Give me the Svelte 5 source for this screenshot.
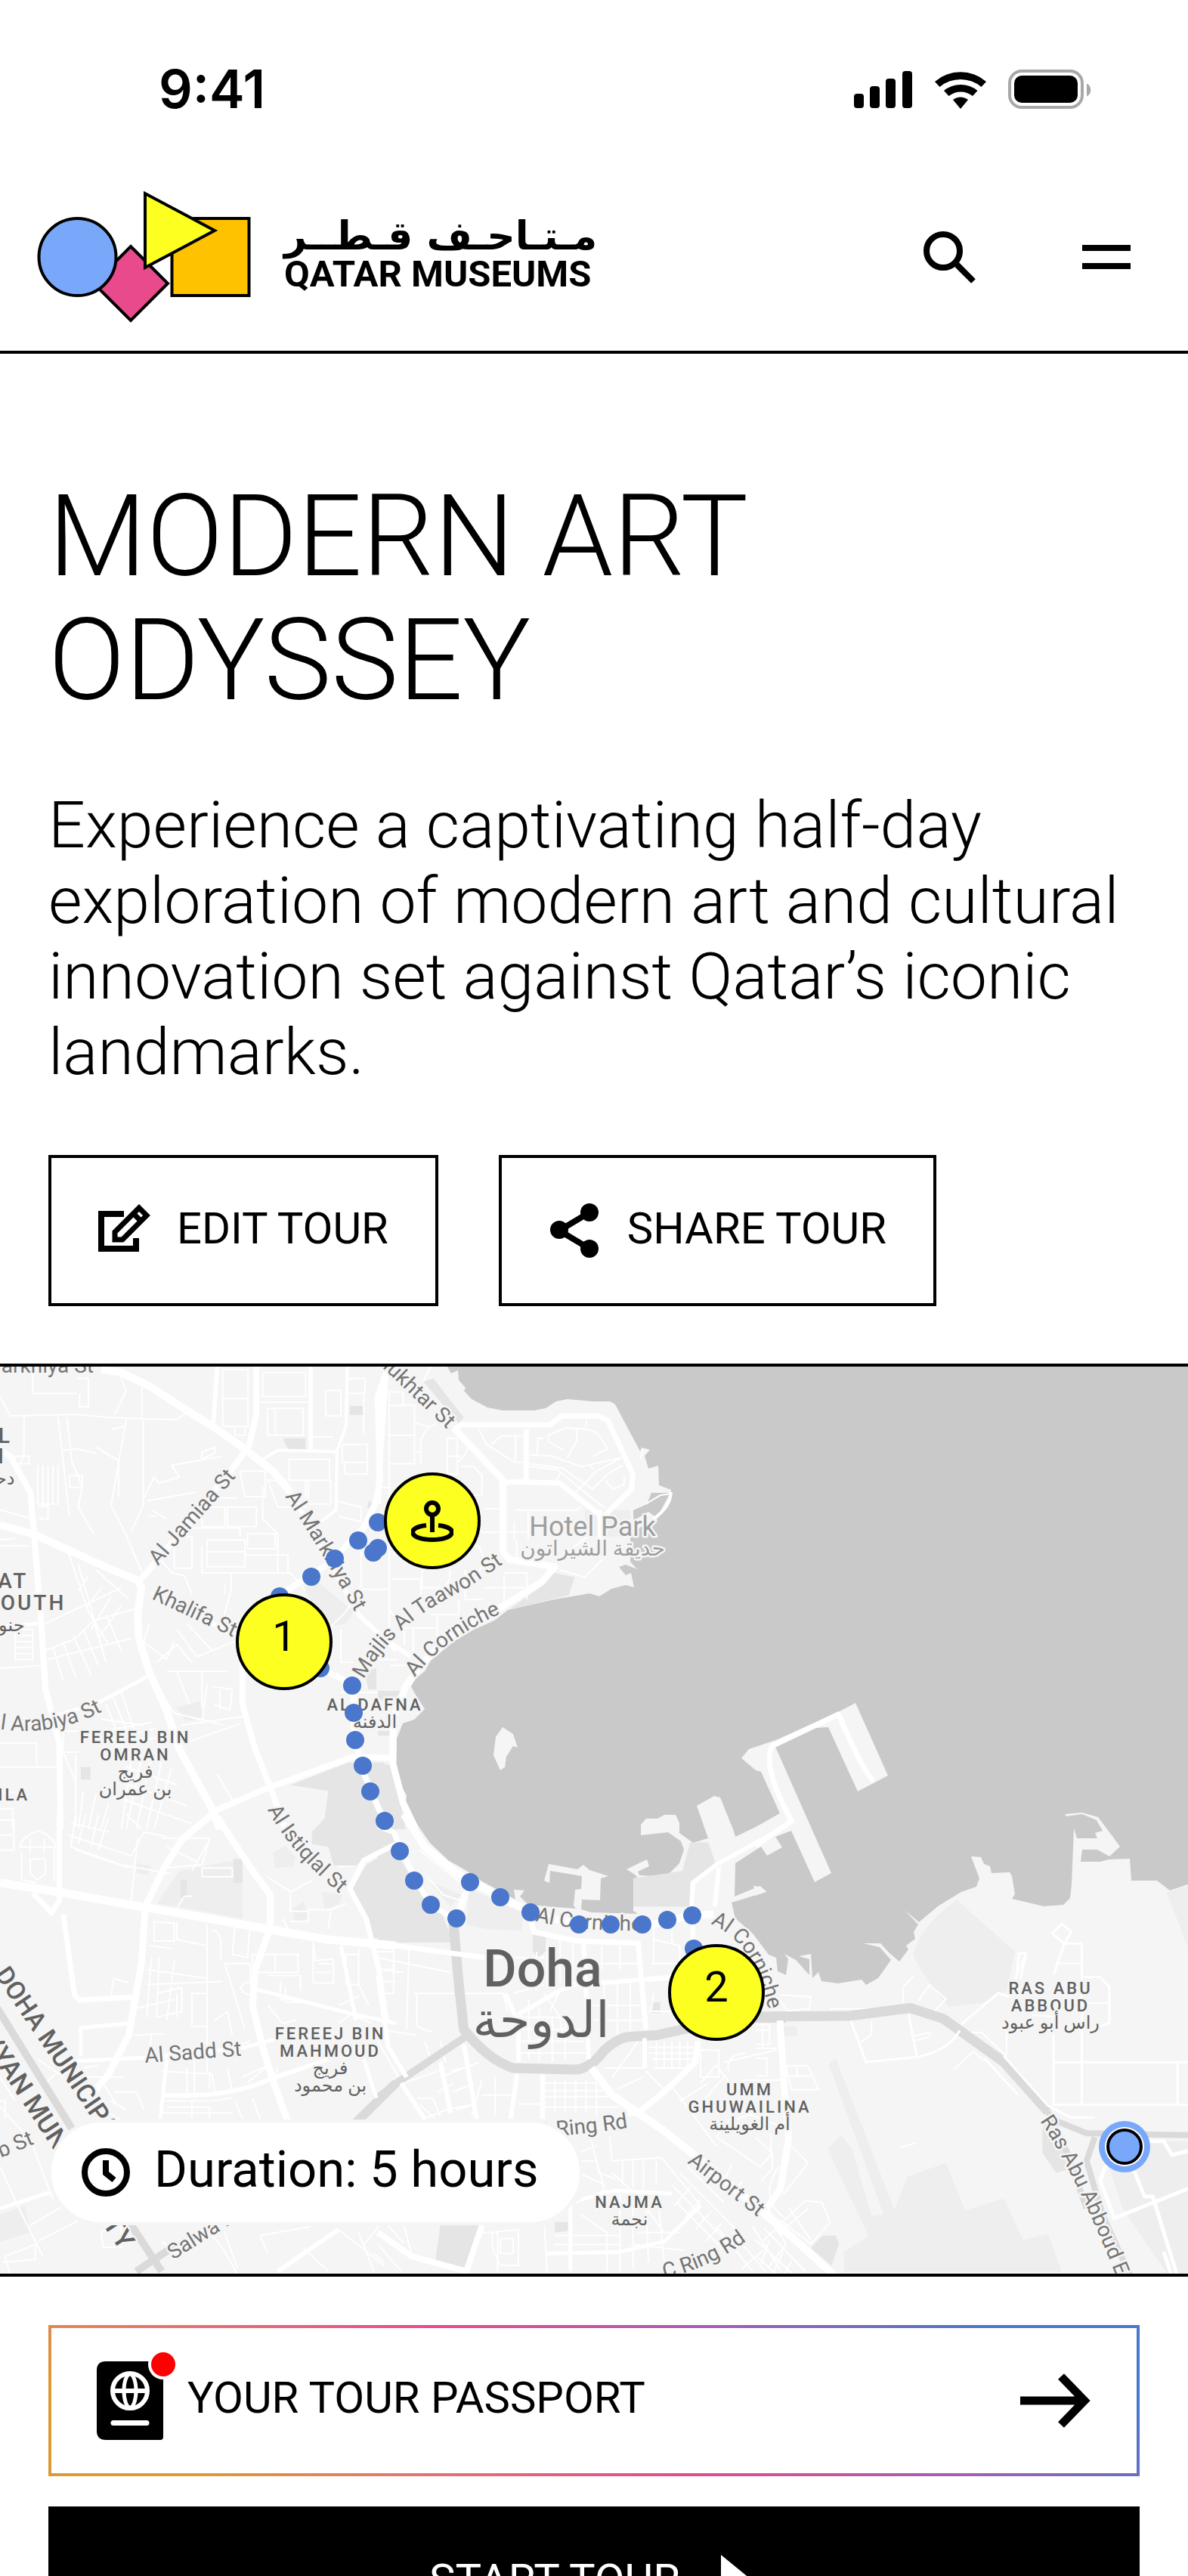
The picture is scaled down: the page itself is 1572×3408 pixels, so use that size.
<script lang="ts">
  type Road = { w: number; d: string };
  type Tile = {
    transform: string;
    parks: string;
    fields: string;
    minor: string;
    trunks: Road[];
    roads: Road[];
  };

  const coast =
    'M592 1808 597 1817 606 1813 607 1826 616 1836 614 1840 624 1851 645 1862 665 1866 707 1866 722 1863 736 1854 751 1851 784 1854 807 1854 814 1858 847 1920 849 1915 860 1918 853 1926 858 1943 871 1939 872 1965 888 1971 887 1985 869 2010 848 2020 834 2033 834 2066 843 2076 828 2070 819 2073 828 2084 835 2081 839 2100 828 2097 809 2102 793 2112 780 2108 734 2116 672 2130 654 2144 627 2156 600 2172 570 2197 562 2211 550 2221 544 2231 548 2239 562 2261 548 2275 533 2280 525 2300 524 2334 528 2358 538 2375 537 2383 545 2404 555 2418 569 2438 593 2461 619 2476 638 2489 682 2513 680 2500 694 2501 688 2509 698 2519 720 2522 762 2525 759 2521 761 2500 769 2499 770 2482 728 2475 727 2491 720 2488 726 2466 764 2473 772 2467 780 2474 805 2482 795 2485 794 2514 770 2513 769 2526 782 2530 844 2532 838 2528 838 2485 844 2484 840 2480 829 2473 856 2460 859 2469 844 2476 846 2481 872 2482 886 2478 899 2465 905 2447 901 2436 884 2424 848 2428 848 2414 855 2406 870 2406 879 2401 894 2401 899 2412 899 2425 917 2438 937 2432 922 2389 945 2376 953 2378 970 2420 973 2430 1000 2417 1032 2399 1007 2344 1000 2342 981 2326 991 2314 1027 2302 1111 2264 1132 2253 1175 2349 1135 2370 1096 2285 1080 2286 1026 2311 1100 2478 1078 2490 1047 2422 1026 2430 1035 2444 1015 2455 1007 2443 973 2465 972 2509 1006 2495 1014 2503 968 2517 973 2538 996 2558 1017 2586 1027 2590 1029 2608 1040 2613 1043 2592 1038 2585 1053 2593 1071 2613 1071 2592 1057 2588 1073 2585 1075 2617 1083 2609 1087 2621 1109 2624 1140 2619 1146 2626 1162 2617 1179 2593 1164 2576 1142 2571 1165 2571 1177 2584 1190 2595 1202 2579 1199 2574 1211 2565 1209 2556 1215 2546 1197 2527 1216 2543 1241 2522 1272 2503 1292 2496 1296 2485 1285 2456 1298 2457 1302 2466 1310 2469 1312 2478 1336 2477 1339 2482 1343 2506 1339 2512 1381 2522 1407 2520 1416 2511 1418 2493 1421 2419 1425 2432 1452 2432 1449 2425 1459 2422 1451 2408 1432 2400 1410 2403 1410 2400 1432 2398 1453 2404 1474 2432 1482 2443 1468 2456 1452 2447 1432 2447 1430 2463 1456 2463 1467 2460 1495 2459 1497 2488 1531 2488 1548 2501 1572 2493 1572 1808Z';
  const islands =
    'M665 2285 679 2294 685 2312 679 2310 670 2324 668 2338 662 2342 653 2322 656 2298ZM997 2495 1005 2496 1014 2502 1000 2508Z';

  const tiles: Tile[] = [
    {
      transform: 'matrix(.3342 0 0 .3954 0 1800)',
      parks:
        'M1150 1420 1380 1345H1520L1568 1450V1568H1280L1300 1440ZM1120 260h90v38h-70ZM1385 152h55v30h-55ZM320 1360h38v42h-38ZM1440 1040l50-10v70h-30ZM1460 470l20 10-10 20-16-10Z',
      fields: 'M1200 760 1260 740 1400 840 1370 880 1300 890ZM700 1160l90-20 15 55-70 12Z',
      minor:
        'M40 185 300 180 430 190 560 195 700 197 740 175M0 120 40 185M130 30v80h175M305 60h45v95h-35v-45M470 40l30 60-45 80M562 90v105h5v290l-50 90M95 185v130l-20 40M230 190l45 330M265 190l20 150 40 80-15 70 60 90M500 195l-60 290 60 100 60 120M440 230l60-10M250 300l50-5 80 15M150 350v130h80V350M170 350v130M190 350v130M210 350v130M275 385h50v40h-50ZM380 290l90 45v120M60 320h55v25H60ZM570 460l40-70 20 20 80-20-30-40 200-30M580 470l200-30M800 305l50-15v20l-50 20ZM882 30h100v190H882ZM885 128h97M1040 40h170v80H1040ZM1060 160h140v90H1060ZM1090 165v85M1030 140h200M930 220h40v30h-40ZM1290 100h60v85h-60ZM1375 60h70v50h-70ZM1380 110h60v140M1230 255h90M1355 280h100v60h-100ZM1365 340h90v40h-90ZM1145 330h160v70h-160ZM950 370h100v85h-80ZM1060 400h150v90h-110ZM1220 400h90v80h-90ZM830 460h110M800 490h90v65h-90ZM900 490h115v65H900ZM820 600h150v90H820ZM820 640h150M690 590h70v105h-70ZM690 600l80-40h180v30M980 580h110v50h-110ZM970 650h170v60M800 620v90H1150l60 60M915 710v60l-30 90M890 750v30M600 500l60 30M590 520h30M610 640l70 70 50 10 30 60M1040 420v110l60 50v130M1430 640v110l-60 90-60 50M1350 900v110h50M1430 765h110M1350 1110h190M1330 470l100 20v50l-90-20M0 500 130 530M0 600 60 595 M0 620h115M150 490l40-5v45h-35M270 640l80 200 80 110M290 650l230 70M310 680l100 300M380 700l130 100M350 720l-40 50M400 760l-60 70M440 790l-80 110M480 820l-90 110M180 880l300-120M180 970l120-40 70-60 170-40M190 1000l330-70M210 960l40 110M250 940l50 120M290 920l70 130M330 900l60 120M370 870l50 140M420 850l60 120M60 900h70v100H60ZM60 920h70M60 940h70M60 960h70M60 980h70M0 1030l170-10M590 880l-20 60 90 60 30-60M620 1010l80-60 60 60M700 900l80 90 150-50M740 880l100 90M660 1040h240M700 1040l50 110M800 1040v120M820 1080l-20 130M600 1060l90 120 200 40M840 1090l80 10-10 70-60-20M870 1100v70M720 1220l250-30M750 1275l200-60M480 1110l70 170M450 1130l70 150M420 1150l70 150M400 1200l170 20M410 1240l190-30M430 1270l190-40M460 1290l170-30M250 1190v120h60M260 1240h50M250 1310l50 100M300 1320v240M330 1440l-20 128M380 1450l-30 118M430 1480l-30 88M520 1340l-40 228M560 1330l-60 238M600 1320l-60 248M640 1340l-60 228M680 1360l-70 208M500 1360l200 60M480 1410l260 80M460 1460l300 90M0 1280h145v80H0M0 1360h225M0 1445h70M0 1500h50v68M860 1385l60 85M750 1340l60 100M1445 1430l70-10 10 60',
      trunks: [],
      roads: [
        { w: 10, d: 'M400 30 480 40 600 90 700 145 850 225 960 290 1080 370 1150 440' },
        { w: 10, d: 'M0 550 130 580 300 645 430 695 545 735 560 760 545 850 550 930 590 1040 660 1170 710 1300 840 1500 870 1568' },
        { w: 8, d: 'M0 300 40 320 120 440 135 580 165 900 180 1100 235 1280 240 1568' },
        { w: 8, d: 'M550 740 750 540 940 340 980 290' },
        { w: 8, d: 'M1015 20V180L985 290' },
        { w: 6, d: 'M1230 20V300M860 20 845 210' },
        { w: 4, d: 'M1375 20 1370 220 1335 300 1330 500 1270 540M1040 330 1100 300 1330 305' },
        { w: 8, d: 'M1530 40 1495 120 1505 400 1490 470 1440 560 1300 680 1170 750 1010 850 960 1000 960 1150 1010 1300 1080 1450 1130 1568' },
        { w: 6, d: 'M1150 440 1420 850 1568 970M600 780 940 920' },
        { w: 5, d: 'M600 1050 400 1140 180 1200M0 890 150 880' },
        { w: 8, d: 'M840 1510 1060 1430 1400 1325 1568 1330M1200 1000 1400 1085 1400 1250 1440 1380 1500 1500 1540 1568' }
      ]
    },
    {
      transform: 'matrix(.3342 0 0 .3954 500 1800)',
      parks: 'M640 760 700 710 780 725 755 785 515 835ZM180 70l40-10 120 130-20 20ZM0 1105h90v30H0ZM0 1240h60v15H0ZM0 1345 60 1355 110 1568H40L0 1450Z',
      fields: 'M820 500h180v90h-180Z',
      minor:
        'M45 105h55v45H45ZM45 150h100v195H45ZM45 250h100M150 210l50 10M150 305h25M170 350V270q10-40 60-60M275 260h40v120h-40ZM275 320h55M320 340l30-30 10-40M330 355h50l32 30v65h-60M0 425h50M45 240v700M400 230l30 50 110 60h40M450 280l40-28h80M545 255v80M630 315l5-55h25M600 315l90 5 115 35 160-30M600 345l130 15 120 70M600 355l110 10 130 90 60 40M675 250l70-25 90 5 35 15 40 50-60 25M675 250v20l60 30M785 225l5 40-40 60M825 195v25M785 440l80-70 100-45M835 345l20 20M720 380l-10 20M850 430l60-50 60-30M900 400l30 30 45-15v-30M420 495h70M545 500h240l20-10M410 575h70M500 575h90M540 540v60M595 500v100M340 620h60l20 40-20 50h-60M500 710h90v90M500 715v95M345 700v100h70M420 760h160M50 730h120v90M175 700v60h80q40-20 30-60M45 835l60 60h130M105 900v50M140 900v80M210 850h110v-50M235 850v80M0 1000h80M50 1020h70M180 70l30-50M720 700l100 25 70-60M750 640l80-50M550 600v60M1060 480l60-30 45-5M1050 300l-12 30',
      trunks: [],
      roads: [
        { w: 7, d: 'M300 230 330 215H680L730 185H870L910 200 1010 380 1005 430 890 525 720 410 520 405 490 420' },
        { w: 9, d: 'M300 225 495 400V640L520 665 700 690 650 740 480 830 300 910 180 1010 110 1090 60 1200 60 1350 100 1480 150 1568' },
        { w: 7, d: 'M587 230V400M880 500V600' },
        { w: 8, d: 'M0 480 10 300 30 50' },
        { w: 6, d: 'M40 940 130 990M0 1330H60' },
        { w: 4, d: 'M1160 440Q1160 490 1090 530' }
      ]
    },
    {
      transform: 'matrix(.3342 0 0 .3954 0 2400)',
      parks:
        'M1568 0H1300L1235 60V100L1300 110 1320 170 1400 180 1440 150 1568 100ZM1568 110 1450 170 1395 250 1480 415H1568ZM925 150h35v80h-35ZM715 220h25v60h-25Z',
      fields: 'M620 300 710 190 960 150V350L800 325 700 310ZM0 1340 100 1310 120 1400 0 1430ZM540 165l60 10-15 30-45-8ZM1080 130l50-25 40 40-10 30-70 5ZM1155 320l50-30 15 60-50 15ZM1275 260l80 10-10 30-60 20Z',
      minor:
        'M0 20h55v100H0M0 70h50M80 110q0-30 70-55 70 25 70 55ZM85 130v90l60 10M120 80v50M175 80v50M215 110v115M120 150h60v50l-30 20-30-20ZM300 0l-20 110 200 60 200 30M300 120l210 60M340 0l-30 100M390 0l-30 110M430 10l-40 110M280 30l150 30M270 70l250 70 50-80 90 15M500 0l60 50M545 80l-25 210M610 360l80 5v60h-80ZM590 440l90 10M700 360v60l120 20M820 370v500M840 390q30 0 35 40v60M930 380h60l-10 100-60-10ZM600 480l-20 200M630 480l-10 200M690 490l-30 200M580 520l240 30M580 570l300-10M620 600l100-20v80l-100 20M700 600v80M760 600h60v110h-60ZM890 500h100v60M890 500l80 220M850 690l50-30 20 80M540 650l150-30M530 740l120-5M600 740l-10 60M830 800l160-40M440 610l10-60 60 15M1000 470h180v60h-180ZM1090 470v60M1060 540h130v50M1110 560v60h80M1130 580v50h60M1240 430l10 60 70-5v80h-80ZM1260 500h60M1250 530h60M1370 470h50v100h-50ZM1420 450v120l40 70M1480 460h80v60h-70M1500 560h68M1150 260l90-40M1150 265v60h70v35h-70M1220 320h90l60-20M1310 325l-10 60M1120 350l30 50M1060 210l90 50M1335 175h70M800 180h120v30H800ZM760 190l60-90M640 80h190l-30 90M700 315l30-40h30M660 110l120 50M650 180l150-10M1340 700l50-30 80 30M1340 640l80-30M950 580l30-20 30 20v30l-40-10ZM1060 640l60 60 50-10M640 860l200 10 10 60M650 820h120v120M740 850v90M830 860v60M900 850l20 80M960 880l100-40M980 900l80-60M1100 850l-20 40M640 960h200l80-10M660 980h170v40M760 960v60M930 960l30 60M1000 950l30 70M640 1000h280M350 930l60 60 100 50M400 890l60 80M440 960l60 30M330 880h160M330 850l60-10M450 930h90l30 60M0 880l60 80M0 960h20v60M150 820l100 60M180 900l40-30M0 980l120 110 90 200M0 1180l70 130 100 170M120 1376l120-60M150 1430l160-70M20 1480l120-40v50L10 1500M20 1480l20 58M400 1400l80-20v70h-70ZM640 1430l60 40M820 1390l60 60 60 90M890 1400l50 120M1030 1410l200-30M1030 1410l30 60M1200 1450l100 80M1340 1390l180 120M1420 1400l60 130M1500 1380l-60 60M1480 1470l40 30M1170 1060l100-10 298 30M1130 1120l300 30 138-30',
      trunks: [
        { w: 10, d: 'M-10 650 290 1060M500 1350 640 1530M540 1530 700 1440' },
        { w: 12, d: 'M1400 1040 1568 900' }
      ],
      roads: [
        { w: 11, d: 'M0 230 240 262 560 310 800 345 1060 385 1300 420 1568 440' },
        { w: 7, d: 'M235 0V290L205 330 130 265M250 335 295 605 315 622 540 612' },
        { w: 9, d: 'M840 0 720 85 650 180 575 310 560 500 510 740 430 870 370 930' },
        { w: 9, d: 'M860 10 1000 190 1070 270 1070 380 1010 520 1000 640 1040 780 1080 890 1140 1030' },
        { w: 7, d: 'M1568 100 1440 155 1385 250 1450 350 1500 520 1530 700' },
        { w: 5, d: 'M1350 440 1410 690M1010 585 1400 670 1568 700M200 830 580 815 975 780 1100 750M660 820 635 1020M0 1320 200 1265M320 710V810M320 715 510 700M1440 820 1490 950' },
        { w: 6, d: 'M650 940Q900 950 1060 890L1300 820M1100 1530 1340 1390' }
      ]
    },
    {
      transform: 'matrix(.3444 0 0 .3954 500 2400)',
      parks:
        'M0 130 60 110 140 230 250 340 290 430 0 430ZM982 215 1170 190 1200 95H1270L1300 170 1210 230 1200 310H982ZM240 1376H390L350 1530 220 1500ZM680 1365h50v30l-50 5ZM595 400h50v60l-30 20-20-20ZM0 0h30l30 60-60 10ZM1050 630h35v35h-35Z',
      fields: 'M350 250 560 330 550 390 420 385 340 370ZM240 240 320 270 280 310 200 230Z',
      minor:
        'M160 120l160 110M190 210l60 60 70 20M330 260l-40 90M0 480l280 50M60 440v160M120 450l-10 270M140 600h150M150 600v110l60 20M0 520l100 10M0 600h60M0 720l150 20M0 760l80 120M180 760l30 80M240 760l20 70M410 480h230M610 460v130M650 440v140M700 420v140M750 430v130M790 500h220M860 440v80M930 440v80M850 560l200-10M330 600h150l20 60M520 600l120-30M640 600l60 80 10 60M700 590l-40 70M520 680h230M540 720h240M580 620v200M620 650v180M670 680v150M720 690v130M530 760h260M540 800h260M820 640h190M830 690h190M870 560v180M920 560v180M970 560v180M1060 420l100 20v60h-100ZM1050 500h120M1040 560l100-10M1040 660h90M1060 600l-10 60M1130 390v50M1060 360v60M1040 780h190M1040 800h180M1050 820h170M1060 850h140M1070 760v90M1100 760v90M1130 760v90M1160 760v90M1190 760v90M900 880l100-120M870 850h150M920 920l100-40M1030 860l80 70M1240 790h70v90h-70ZM1330 830l200-40M1350 860q-20-50 60-60M1400 890h160M1240 900l60-60 60 70M1250 960l80-80M1120 900l180 210M1160 960l110-60M1300 1080l80-90 188 60M1300 1080l170 100 40-40v-70M1380 1020l100-30M400 890l-40 120M450 880v130M400 940h110M640 870v150M680 890v110M720 890v110M760 890v110M800 890v110M840 900v110M640 900h200M640 925h230M640 945h260M540 970h100M640 980h290M130 860l60-20M100 900l160-50M150 950h60l30 60M160 970l60 50M230 930l60-30M180 1020l80-30 110-20M280 860l90-20M290 930l80-30M300 990l80-20M240 880l150-50M770 1160h70l30 90M820 1090l30 110 60 20M890 1080l10 80 190-10 150 160M900 1200l100 80 100 120M940 1160v80M980 1160v90M1020 1160v100M1070 1160v80M770 1200l100 40-30 90M780 1130l60-20M760 1300l110-40 260 10M1130 1240l220 200M1160 1200l250 220M1190 1180l140 120M1150 1300l180 160M1200 1250l-60 60M1240 1290l-60 60M1280 1330l-60 60M1320 1370l-60 60M740 1330v200M680 1410h250M680 1440h250M640 1376l10 160M650 1470h280M930 1270v260M980 1290v230M1030 1300l10 200M1080 1320l20 180M780 1340l100 60v130M400 1400h60v130M440 1400l100-10v120h-70l-30-60ZM470 1420h50v50h-50ZM100 1376l30 100M0 1440l90 90M40 1376l60 60M1000 1400h160M980 1440l200 20M1300 1380l140 150M1360 1400l130 130M1500 1320l68 120M1440 1380l110 150M1480 1460l-80 60M1568 1440l-70 80M1540 1180q-80 100 20 170M1360 1170l-20 40M1400 1230l-20 20',
      trunks: [
        { w: 13, d: 'M290 360 310 560 330 720Q420 820 520 850L760 855Q820 850 870 790 930 745 970 745L1070 740 1200 715 1300 680 1568 682' },
        { w: 10, d: 'M-10 955 80 895 345 740' }
      ],
      roads: [
        { w: 10, d: 'M100 0 180 110 300 195 480 285 640 345 800 370 1050 370 1200 340 1290 335' },
        { w: 7, d: 'M0 40 60 60 150 230 210 310 300 350M350 230 320 320' },
        { w: 7, d: 'M0 432 280 465 410 480M580 330 600 395 770 425 1000 432 1030 720' },
        { w: 6, d: 'M1205 310 1210 230 1300 170 1568 40M1310 180 1295 310M1210 345V450' },
        { w: 10, d: 'M820 850 900 940 1100 1060 1300 1200 1568 1400' },
        { w: 8, d: 'M1230 760 1220 830 1100 930 1000 1000 960 1000' },
        { w: 6, d: 'M1025 750V850M535 870 510 1020M632 870V1020M90 900 180 1020M240 830 280 1000M330 770 380 1020M790 430 800 600 810 820M0 540 40 780 110 880M490 600 540 700V830M540 670 700 590 790 560M860 565 1130 545' },
        { w: 8, d: 'M0 1400 130 1480 340 1530 400 1376' },
        { w: 5, d: 'M650 1470 930 1465 1100 1430 1240 1310M740 1300V1530M780 1290 910 1260 1130 1270' }
      ]
    },
    {
      transform: 'matrix(.3648 0 0 .5229 1000 2200)',
      parks: 'M200 1480 240 1450 290 1448 302 1470 275 1525ZM1040 1180 1060 1150 1120 1230 1140 1280 1090 1290 1040 1240Z',
      fields:
        'M730 600 940 730 910 830 820 860 700 870 620 800 570 740Q600 660 730 600ZM1490 580 1568 565V720ZM550 1300 690 1265 760 1385 900 1355 970 1460 1060 1445 1110 1540H320V1490L410 1450 260 1230 310 1195 350 1230 420 1400 500 1390ZM265 1015 290 1000 590 1540H540ZM1250 1210H1568V1553H1500L1330 1380ZM90 920h60v24h-60Z',
      minor: 'M90 840l110 5-5 30-80 5-30-30M0 915h50v50H0M0 930h50M0 975h80M25 915v60M0 1000h40v45H0M110 1020h80l38 60H130ZM120 1045h80M150 1020v30M0 1200l60 40v40l-40 30M110 1210l80 55-90 80M30 1460l150-100 60 5 30 50-70 55-110-60M90 1440l100-60M120 1380l80 80M0 1460l140 90M30 1430l150 110M60 1410l30 40M0 1500l80 50M20 1520l30-60M60 1550l40-60M100 1553l30-40M270 875h180M420 905v35l-40 20M535 860v-40l40-30M590 855l40-40 60 35-40 30M570 945l60-10q20 10-50 20M720 1028l70-45 40 25M520 1227l60-12M910 930v60M750 935h70l90 60M1000 890l80 5M940 800l40-65M1140 860h140M1100 760h80',
      trunks: [
        { w: 13, d: 'M-5 895 340 893 560 873 680 900 900 1010 1060 1135' },
        { w: 8, d: 'M1060 1150 1200 1190 1568 1195M1230 1200 1200 1260 1260 1400 1360 1553M1060 1135 1130 1240 1200 1380' }
      ],
      roads: [
        { w: 7, d: 'M430 298Q400 290 300 130L60 210Q20 260 130 400L0 462' },
        { w: 9, d: 'M88 905 105 1090 120 1200 90 1330 40 1380' },
        { w: 10, d: 'M0 1370 290 1553' },
        { w: 3, d: 'M345 905 400 1010 590 997Q700 980 740 930M555 890 585 997M745 915 880 835 920 845M945 800 955 735H980L960 800' },
        { w: 3, d: 'M1080 940V1118H1568M1083 1010H1568M1183 710V1118M1110 710H1183M1190 795H1250L1283 820V910L1250 920M1530 1010V1118M1080 790 1120 710 1075 685 1110 660 1145 680 1120 710M900 995 1060 1120 1140 1150H1230M830 1000 950 1092' },
        { w: 5, d: 'M1270 1270 1250 1310 1300 1405 1568 1330M1370 1280 1410 1350H1440L1530 1553M1480 1490 1510 1553M1400 1210H1480L1510 1245 1568 1235' }
      ]
    }
  ];

  type Street = { text: string; d: string; size?: number; end?: boolean; bold?: boolean };
  const streets: Street[] = [
    { text: 'Al Markhiya St', d: 'M-100 1816H124', end: true },
    { text: 'Al Jamiaa St', d: 'M209 2072 322 1943' },
    { text: 'Al Markhiya St', d: 'M377 1980Q425 2050 485 2160' },
    { text: 'Khalifa St', d: 'M200 2115 330 2176' },
    { text: 'Al Arabiya St', d: 'M-18 2284Q74 2305 156 2252' },
    { text: 'Mukhtar St', d: 'M493 1797 620 1918' },
    { text: 'Majlis Al Taawon St', d: 'M481 2222Q505 2180 535 2154 560 2130 617 2102L690 2052' },
    { text: 'Al Corniche', d: 'M549 2219Q588 2165 678 2128' },
    { text: 'Al Istiqlal St', d: 'M354 2394Q385 2455 470 2522' },
    { text: 'Al Corniche', d: 'M708 2541Q760 2556 870 2554' },
    { text: 'Al Corniche', d: 'M940 2545Q1000 2570 1018 2665' },
    { text: 'Al Sadd St', d: 'M192 2729 340 2718' },
    { text: 'Airport St', d: 'M909 2861 1030 2954' },
    { text: 'B Ring Rd', d: 'M650 2832Q760 2826 831 2815', end: true },
    { text: 'C Ring Rd', d: 'M879 3014Q945 3000 1000 2955' },
    { text: 'Salwa Rd', d: 'M229 2990 400 2884' },
    { text: 'Al Waab St', d: 'M-130 2910 46 2836', end: true },
    { text: 'Ras Abu Abboud Expy', d: 'M1376 2806Q1430 2885 1500 3070' },
    { text: 'DOHA MUNICIPALITY', d: 'M-8 2612 244 2982', size: 34, bold: true },
    { text: 'AL RAYYAN MUNICIPALITY', d: 'M-131 2538 159 2978', size: 35, bold: true, end: true }
  ];

  type Place = { lines: string[]; arabic: string[]; x: number; y: number; kind: string };
  const places: Place[] = [
    { lines: ['AL DAFNA'], arabic: ['الدفنة'], x: 496, y: 2263, kind: 'district' },
    { lines: ['FEREEJ BIN', 'OMRAN'], arabic: ['فريج', 'بن عمران'], x: 179, y: 2306, kind: 'district' },
    { lines: ['FEREEJ BIN', 'MAHMOUD'], arabic: ['فريج', 'بن محمود'], x: 437, y: 2698, kind: 'district' },
    { lines: ['UMM', 'GHUWAILINA'], arabic: ['أم الغويلينة'], x: 992, y: 2772, kind: 'district' },
    { lines: ['NAJMA'], arabic: ['نجمة'], x: 833, y: 2921, kind: 'district' },
    { lines: ['RAS ABU', 'ABBOUD'], arabic: ['راس أبو عبود'], x: 1390, y: 2638, kind: 'district' },
    { lines: ['SILA'], arabic: [], x: 10, y: 2382, kind: 'district' },
    { lines: ['NUAIJAT'], arabic: [], x: -30, y: 2101, kind: 'suburb' },
    { lines: ['SOUTH'], arabic: [], x: 34, y: 2130, kind: 'suburb' },
    { lines: ['AL'], arabic: [], x: -4, y: 1909, kind: 'suburb' }
  ];

  const dots: [number, number][] = [
    [500, 2014], [474, 2038], [500, 2048], [494, 2054], [443, 2062], [412, 2086], [370, 2112],
    [424, 2207], [466, 2230], [468, 2266], [470, 2302], [480, 2336], [490, 2370], [509, 2409],
    [529, 2449], [548, 2488], [570, 2520], [604, 2538], [622, 2490], [662, 2510], [702, 2530],
    [766, 2546], [808, 2546], [850, 2546], [883, 2540], [916, 2534], [918, 2578]
  ];

  const left = (x: number) => `${(x / 1572) * 100}%`;
  const top = (y: number) => `${((y - 1808) / 1200) * 100}%`;
</script>

<div class="app">
  <div class="status">
    <span class="time">9:41</span>
    <svg class="status-icons" viewBox="0 0 314 52" aria-hidden="true">
      <rect x="0" y="32" width="13" height="19" rx="4" />
      <rect x="21" y="22" width="13" height="29" rx="4" />
      <rect x="42" y="12" width="13" height="39" rx="4" />
      <rect x="64" y="2" width="13" height="49" rx="4" />
      <path d="M107 16a52 52 0 0 1 68 0l-6.500 7a43 43 0 0 0-55 0zM119 28a35 35 0 0 1 44.500 0l-6.500 7a25 25 0 0 0-31.500 0zM131 40a16 16 0 0 1 20 0l-10 12z" />
      <rect x="206" y="2" width="96" height="48" rx="16" fill="none" stroke="#a8a8a8" stroke-width="4" />
      <rect x="212" y="8" width="84" height="36" rx="10" />
      <path d="M308 18.500a9.500 9.500 0 0 1 0 17z" fill="#a8a8a8" />
    </svg>
  </div>

  <header class="header">
    <a class="brand" href="#home" aria-label="Qatar Museums">
      <svg class="mark" viewBox="48 248 286 184" aria-hidden="true">
        <g stroke="#000" stroke-width="4">
          <path d="M173 326 222 375 173 424 124 375z" fill="#e84a8c" />
          <circle cx="102.500" cy="340" r="51" fill="#79a8fb" />
          <path d="M227.500 289h102v102h-102z" fill="#ffc200" />
          <path d="M192 256 284 305 192 354z" fill="#fcff1f" />
        </g>
      </svg>
      <span class="names">
        <span class="name-ar" lang="ar" dir="rtl">مـتـاحـف قـطــر</span>
        <span class="name-en">QATAR MUSEUMS</span>
      </span>
    </a>
    <nav class="tools">
      <button class="icon-btn" aria-label="Search">
        <svg viewBox="0 0 72 72" class="tool-icon"><circle cx="28" cy="28" r="22" fill="none" stroke="#000" stroke-width="8" /><path d="M44 44 68 68" stroke="#000" stroke-width="8" /></svg>
      </button>
      <button class="icon-btn" aria-label="Menu">
        <svg viewBox="0 0 72 72" class="tool-icon"><path d="M4 20h64v8H4zM4 44h64v8H4z" /></svg>
      </button>
    </nav>
  </header>

  <main>
    <section class="intro">
      <h1>MODERN ART ODYSSEY</h1>
      <p>Experience a captivating half-day exploration of modern art and cultural innovation set against Qatar’s iconic landmarks.</p>
      <div class="actions">
        <button class="outline">
          <svg class="action-icon" viewBox="130 1592 72 72" aria-hidden="true">
            <path d="M164 1606H134V1652H180V1638" fill="none" stroke="#000" stroke-width="8" />
            <path d="M152 1640V1630L184 1598 194 1608 162 1640ZM175 1604 188 1617" fill="none" stroke="#000" stroke-width="7" />
          </svg>
          <span class="caption">EDIT TOUR</span>
        </button>
        <button class="outline">
          <svg class="action-icon" viewBox="726 1592 72 72" aria-hidden="true">
            <path d="M780 1604 740 1628 780 1652" fill="none" stroke="#000" stroke-width="8" />
            <circle cx="780" cy="1604" r="12" /><circle cx="740" cy="1627" r="12" /><circle cx="780" cy="1652" r="12" />
          </svg>
          <span class="caption">SHARE TOUR</span>
        </button>
      </div>
    </section>

    <section class="map" aria-label="Tour map">
      <svg class="canvas" viewBox="0 1808 1572 1200">
        <rect y="1808" width="1572" height="1200" fill="#f5f5f5" />
        <path d={coast} fill="#c9c9c9" />
        <path d={islands} fill="#f5f5f5" />
        <path d="M862 1975H887L869 2008 858 2000 838 2012V1998L856 1990Z" fill="#c9c9c9" />
        {#each tiles as t}
          <g transform={t.transform}>
            <path d={t.fields} fill="#eeeeee" />
            <path d={t.parks} fill="#e5e5e5" />
            <path class="road" d={t.minor} stroke-width="2" />
          </g>
        {/each}
        {#each tiles as t}
          <g transform={t.transform}>
            {#each t.trunks as r}<path class="road trunk" d={r.d} stroke-width={r.w} />{/each}
          </g>
        {/each}
        {#each tiles as t}
          <g transform={t.transform}>
            {#each t.roads as r}<path class="road" d={r.d} stroke-width={r.w} />{/each}
          </g>
        {/each}

        {#each streets as s, i}
          <path id="street-{i}" d={s.d} fill="none" />
          <text class="street" class:bold={s.bold} font-size={s.size ?? 28}>
            <textPath href="#street-{i}" startOffset={s.end ? '100%' : '0'} text-anchor={s.end ? 'end' : 'start'}>{s.text}</textPath>
          </text>
        {/each}

        {#each places as p}
          {#each p.lines as line, i}
            <text class={p.kind} x={p.x} y={p.y + i * 23}>{line}</text>
          {/each}
          {#each p.arabic as line, i}
            <text class="arabic" x={p.x} y={p.y + (p.lines.length + i) * 23}>{line}</text>
          {/each}
        {/each}
        <text class="suburb" x="-6" y="1936">M</text>
        <text class="arabic" x="-6" y="1964">دحيل</text>
        <text class="arabic" x="4" y="2158">جنوب</text>
        <text class="park" x="784" y="2032">Hotel Park</text>
        <text class="park-ar" x="784" y="2058">حديقة الشيراتون</text>
        <text class="city" x="718" y="2628">Doha</text>
        <text class="city-ar" x="716" y="2695">الدوحة</text>

        {#each dots as [x, y]}<circle cx={x} cy={y} r="12" fill="#4a76cb" />{/each}
      </svg>

      <button class="marker" style:left={left(572)} style:top={top(2012)} aria-label="Starting point">
        <svg class="pin" viewBox="544 1984 56 56" fill="none" stroke="#000" stroke-width="6">
          <circle cx="572" cy="1996" r="8" />
          <path d="M572 2004V2027M564 2018C536 2021 542 2037 572 2037S608 2021 580 2018" />
        </svg>
      </button>
      <button class="marker" style:left={left(376)} style:top={top(2172)}>1</button>
      <button class="marker" style:left={left(948)} style:top={top(2636)}>2</button>
      <span class="here" style:left={left(1488)} style:top={top(2840)}></span>

      <div class="duration">
        <svg class="clock" viewBox="0 0 64 64" fill="none" stroke="#000" stroke-width="8" aria-hidden="true">
          <circle cx="32" cy="32" r="28" />
          <path d="M32 16V33L43 42" />
        </svg>
        Duration: 5 hours
      </div>
    </section>

    <section class="footer">
      <button class="passport">
        <svg class="passport-icon" viewBox="128 3112 104 116" aria-hidden="true">
          <path d="M140 3124H212Q216 3124 216 3128V3224Q216 3228 212 3228H140Q128 3228 128 3216V3136Q128 3124 140 3124Z" />
          <g fill="none" stroke="#fff" stroke-width="6">
            <circle cx="172" cy="3163" r="23" />
            <ellipse cx="172" cy="3163" rx="8" ry="22" stroke-width="5" />
            <path d="M149 3163H195" />
            <path d="M150 3205.500H194" stroke-width="7" stroke-linecap="round" />
          </g>
          <circle cx="216" cy="3128" r="20" fill="#fff" />
          <circle cx="216" cy="3128" r="16" fill="#f00" />
        </svg>
        <span class="label">YOUR TOUR PASSPORT</span>
        <svg class="arrow" viewBox="0 0 96 72" fill="none" stroke="#000" stroke-width="11" aria-hidden="true">
          <path d="M2 36H86M56 4 87 36 56 68" />
        </svg>
      </button>
      <button class="start">
        <span class="caption">START TOUR</span>
        <svg class="play" viewBox="0 0 44 72" aria-hidden="true"><path d="M0 0 44 36 0 72z" fill="#fff" /></svg>
      </button>
    </section>
  </main>
</div>

<style>
  :global(body) {
    background: #fff;
  }
  .app {
    height: 100vh;
    overflow: hidden;
    background: #fff;
    color: #000;
    font-family: Roboto, 'DejaVu Sans', sans-serif;
  }
  button {
    margin: 0;
    padding: 0;
    border: 0;
    background: none;
    color: inherit;
    font: inherit;
    cursor: pointer;
  }
  svg {
    display: block;
    flex: none;
  }
  .status {
    display: flex;
    justify-content: space-between;
    align-items: center;
    height: 68px;
    padding: 84px 128px 64px 210px;
  }
  .time {
    font: 600 70px/68px Inter, sans-serif;
  }
  .status-icons {
    width: 314px;
    height: 52px;
  }
  .header {
    display: flex;
    justify-content: space-between;
    align-items: center;
    height: 248px;
    padding: 0 72px 0 48px;
    border-bottom: 4px solid #000;
  }
  .brand {
    display: flex;
    align-items: center;
    gap: 42px;
    color: inherit;
    text-decoration: none;
  }
  .mark {
    width: 286px;
    height: 184px;
  }
  .names {
    display: flex;
    flex-direction: column;
    padding-bottom: 2px;
  }
  .name-ar {
    font: 700 52px/48px 'DejaVu Sans', sans-serif;
  }
  .name-en {
    font-size: 49px;
    font-weight: 700;
    line-height: 54px;
  }
  .tools {
    display: flex;
    gap: 136px;
  }
  .tool-icon {
    width: 72px;
    height: 72px;
  }
  .intro {
    padding: 160px 64px 76px;
  }
  h1 {
    max-width: 1100px;
    margin: 0 0 86px;
    font-size: 150px;
    font-weight: 300;
    line-height: 164px;
  }
  p {
    margin: 0 0 86px;
    font-size: 86px;
    font-weight: 300;
    line-height: 100px;
  }
  .actions {
    display: flex;
    gap: 80px;
  }
  .outline {
    display: flex;
    align-items: center;
    gap: 32px;
    height: 200px;
    padding: 0 62px;
    border: 4px solid #000;
    font-size: 58px;
  }
  .caption {
    padding-bottom: 6px;
  }
  .action-icon {
    width: 72px;
    height: 72px;
  }
  .map {
    position: relative;
    border-top: 4px solid #000;
    border-bottom: 4px solid #000;
    overflow: hidden;
  }
  .canvas {
    width: 100%;
    height: auto;
  }
  .road {
    fill: none;
    stroke: #fff;
    stroke-linejoin: round;
    vector-effect: non-scaling-stroke;
  }
  .trunk {
    stroke: #dadada;
  }
  .canvas text {
    fill: #616161;
    stroke: #f5f5f5;
    stroke-width: 5px;
    stroke-linejoin: round;
    paint-order: stroke;
    text-anchor: middle;
  }
  .canvas .street {
    fill: #757575;
    text-anchor: start;
  }
  .canvas .bold {
    fill: #616161;
    font-weight: 500;
  }
  .district {
    font-size: 22px;
    font-weight: 500;
    letter-spacing: 3px;
  }
  .suburb {
    font-size: 28px;
    font-weight: 500;
    letter-spacing: 3px;
  }
  .arabic {
    font-size: 24px;
  }
  .canvas .park,
  .canvas .park-ar {
    fill: #9e9e9e;
    font-size: 36px;
  }
  .canvas .park-ar {
    font-size: 28px;
  }
  .city {
    font-size: 68px;
    font-weight: 500;
  }
  .city-ar {
    font-size: 66px;
  }
  .marker {
    position: absolute;
    box-sizing: border-box;
    display: flex;
    align-items: center;
    justify-content: center;
    width: 128px;
    height: 128px;
    padding-bottom: 14px;
    border: 4px solid #000;
    border-radius: 50%;
    background: #fcff1f;
    font-size: 56px;
    transform: translate(-50%, -50%);
  }
  .pin {
    width: 56px;
    height: 56px;
    margin-top: 14px;
  }
  .here {
    position: absolute;
    box-sizing: border-box;
    width: 48px;
    height: 48px;
    border: 4px solid #000;
    border-radius: 50%;
    background: #79a8fb;
    box-shadow: 0 0 0 2px #fff, 0 0 0 10px #79a8fb;
    transform: translate(-50%, -50%);
  }
  .duration {
    position: absolute;
    left: 64px;
    bottom: 64px;
    box-sizing: border-box;
    display: flex;
    align-items: center;
    gap: 32px;
    height: 140px;
    padding: 0 54px 8px 40px;
    border: 4px solid #f5f5f5;
    border-radius: 70px;
    background: #fff;
    font-size: 67px;
    white-space: nowrap;
  }
  .clock {
    width: 64px;
    height: 64px;
    margin-top: 8px;
  }
  .footer {
    display: flex;
    flex-direction: column;
    gap: 40px;
    padding: 64px;
  }
  .passport {
    display: flex;
    align-items: center;
    box-sizing: border-box;
    height: 200px;
    padding: 0 60px;
    border: 4px solid transparent;
    background:
      linear-gradient(#fff, #fff) padding-box,
      linear-gradient(31deg, #dd9a33 0%, #dd9a33 12%, #e5766c 26%, #e8488c 48%, #a45fb0 68%, #4a76cb 88%) border-box;
    font-size: 58px;
  }
  .passport-icon {
    width: 104px;
    height: 116px;
    margin-bottom: 12px;
  }
  .label {
    flex: 1;
    padding: 0 0 8px 16px;
    text-align: left;
  }
  .arrow {
    width: 96px;
    height: 72px;
  }
  .start {
    display: flex;
    align-items: center;
    justify-content: center;
    gap: 54px;
    height: 200px;
    padding-right: 6px;
    background: #000;
    color: #fff;
    font-size: 58px;
  }
  .play {
    width: 44px;
    height: 72px;
  }
</style>
